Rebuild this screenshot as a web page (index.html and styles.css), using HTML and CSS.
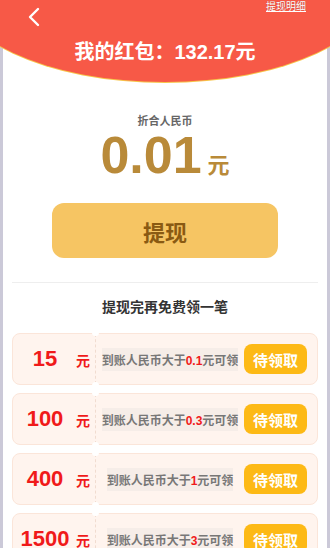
FILE: index.html
```html
<!DOCTYPE html>
<html lang="zh">
<head>
    <meta charset="UTF-8">
    <meta name="viewport" content="width=device-width, initial-scale=1.0">
    <title>我的红包</title>
    <link rel="stylesheet" href="styles.css">
</head>
<body>
    <div class="header">
        <div class="top">
            <svg class="back" width="14" height="20" viewBox="0 0 14 20"><path d="M11 2 L3 10 L11 18" fill="none" stroke="#fff" stroke-width="2.4" stroke-linecap="round" stroke-linejoin="round"/></svg>
            <span class="detail">提现明细</span>
        </div>
        <div class="title">我的红包：132.17元</div>
    </div>

    <div class="main">
        <div class="label">折合人民币</div>
        <div class="amount">0.01<span class="yuan">元</span></div>
        <button class="withdraw">提现</button>
        <div class="line"></div>
        <div class="sub">提现完再免费领一笔</div>

        <div class="list">
            <div class="row">
                <div class="left"><span class="num">15</span><span class="unit">元</span></div>
                <div class="cut"></div>
                <div class="mid"><span>到账人民币大于<b>0.1</b>元可领</span></div>
                <button class="get">待领取</button>
            </div>
            <div class="row">
                <div class="left"><span class="num">100</span><span class="unit">元</span></div>
                <div class="cut"></div>
                <div class="mid"><span>到账人民币大于<b>0.3</b>元可领</span></div>
                <button class="get">待领取</button>
            </div>
            <div class="row">
                <div class="left"><span class="num">400</span><span class="unit">元</span></div>
                <div class="cut"></div>
                <div class="mid"><span>到账人民币大于<b>1</b>元可领</span></div>
                <button class="get">待领取</button>
            </div>
            <div class="row">
                <div class="left"><span class="num">1500</span><span class="unit">元</span></div>
                <div class="cut"></div>
                <div class="mid"><span>到账人民币大于<b>3</b>元可领</span></div>
                <button class="get">待领取</button>
            </div>
        </div>
    </div>
</body>
</html>
```

FILE: styles.css
```css
body { margin: 0; height: 548px; background: #fff; font-family: "Liberation Sans", "Noto Sans CJK SC", sans-serif; box-shadow: inset 3px 0 #cbc9d8, inset -3px 0 #cbc9d8; overflow: hidden; }
.header { position: relative; z-index: 0; height: 83px; overflow: hidden; color: #fff; }
.header::before { content: ""; position: absolute; z-index: -1; left: 50%; margin-left: -215px; width: 430px; height: 200px; bottom: 1px; border-radius: 50%; background: #f75947; box-shadow: 0 1px 0 #f7c54a; }
.top { height: 28px; display: flex; justify-content: space-between; align-items: flex-start; padding: 0 24px 0 27px; }
.back { margin-top: 7px; }
.detail { font-size: 10px; line-height: 12px; margin-top: 1px; text-decoration: underline; text-shadow: 0 0 1px rgba(0,0,0,0.3); }
.title { margin-top: 12px; text-align: center; font-size: 20px; line-height: 24px; font-weight: bold; }
.main { text-align: center; }
.label { margin-top: 30px; font-size: 11px; line-height: 16px; color: #666; font-weight: bold; }
.amount { margin-top: 2px; font-size: 52px; line-height: 48px; font-weight: bold; color: #b98a39; }
.amount .yuan { font-size: 22px; line-height: 22px; margin-left: 6px; }
.withdraw { display: block; margin: 24px auto 0; width: 226px; height: 55px; border: none; border-radius: 12px; background: #f6c563; color: #8a5a12; font-size: 22px; font-weight: bold; font-family: inherit; }
.line { margin: 24px 12px 0; height: 1px; background: #eeeeee; }
.sub { margin-top: 14px; font-size: 14px; line-height: 20px; font-weight: bold; color: #333; }
.list { margin: 16px 12px 0; display: flex; flex-direction: column; gap: 8px; }
.row { display: flex; flex-shrink: 0; align-items: center; height: 52px; box-sizing: border-box; border: 1px solid #fbe5d9; border-radius: 8px; background: #fff4ee; }
.left { width: 82px; display: flex; align-items: baseline; color: #f01a1a; font-weight: bold; }
.num { width: 56px; margin-left: 4px; font-size: 22px; text-align: center; }
.unit { margin-left: 3px; font-size: 14px; }
.cut { position: relative; align-self: stretch; width: 0; border-left: 1px dashed #f1dcd0; }
.cut::before, .cut::after { content: ""; position: absolute; left: -4px; width: 7px; height: 7px; border-radius: 50%; background: #fff; }
.cut::before { top: -5px; }
.cut::after { bottom: -5px; }
.mid { flex: 1; text-align: center; }
.mid span { display: inline-block; padding: 3px 0; background: #f6ede8; font-size: 12px; font-weight: bold; color: #777; }
.mid b { color: #f01a1a; }
.get { width: 63px; height: 30px; margin-right: 10px; border: none; border-radius: 8px; background: #fdb915; color: #fff; font-size: 15px; font-weight: bold; font-family: inherit; }
```
